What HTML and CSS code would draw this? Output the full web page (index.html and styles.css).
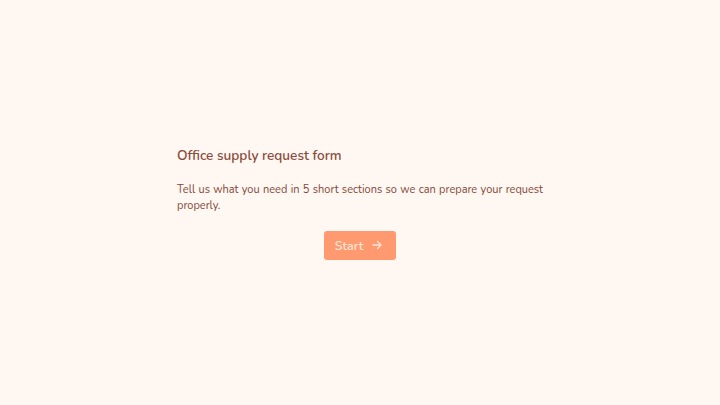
FILE: index.html
```html
<!DOCTYPE html>
<html>
<head>
<meta charset="utf-8">
<link rel="stylesheet" href="styles.css">
</head>
<body>
<main class="page">
  <section class="intro">
    <h1 class="title">Office supply request form</h1>
    <p class="lead">Tell us what you need in 5 short sections so we can prepare your request properly.</p>
    <div class="actions">
      <button class="start">Start
        <svg class="arrow" width="10" height="10" viewBox="0 0 10 10" fill="none" stroke="currentColor" stroke-width="1.3" stroke-linecap="round" stroke-linejoin="round"><path d="M1 5h8M5.5 1.5L9 5l-3.5 3.5"/></svg>
      </button>
    </div>
  </section>
</main>
</body>
</html>
```
FILE: styles.css
```css
html, body {
  margin: 0;
  padding: 0;
  background: #fff7f2;
}
body {
  font-family: "Nunito", "Lato", sans-serif;
  color: #8a4b3b;
}
.page {
  height: 405px;
  display: flex;
  align-items: center;
  justify-content: center;
}
.intro {
  width: 366px;
}
.title {
  margin: 0 0 16px 0;
  font-size: 13.6px;
  font-weight: 600;
  line-height: 20.4px;
  color: #8a4b3b;
}
.lead {
  margin: 0 -14px 16px 0;
  font-size: 11px;
  word-spacing: 0.5px;
  line-height: 16.3px;
  color: #834737;
}
.actions {
  display: flex;
  justify-content: center;
}
.start {
  display: flex;
  align-items: center;
  gap: 9px;
  height: 29px;
  padding: 0 14px 0 11px;
  border: none;
  border-radius: 3px;
  background: #ff9a70;
  color: #ffe4d6;
  font-family: inherit;
  font-size: 12.5px;
  font-weight: 600;
  cursor: pointer;
}
.arrow {
  display: block;
}
```
